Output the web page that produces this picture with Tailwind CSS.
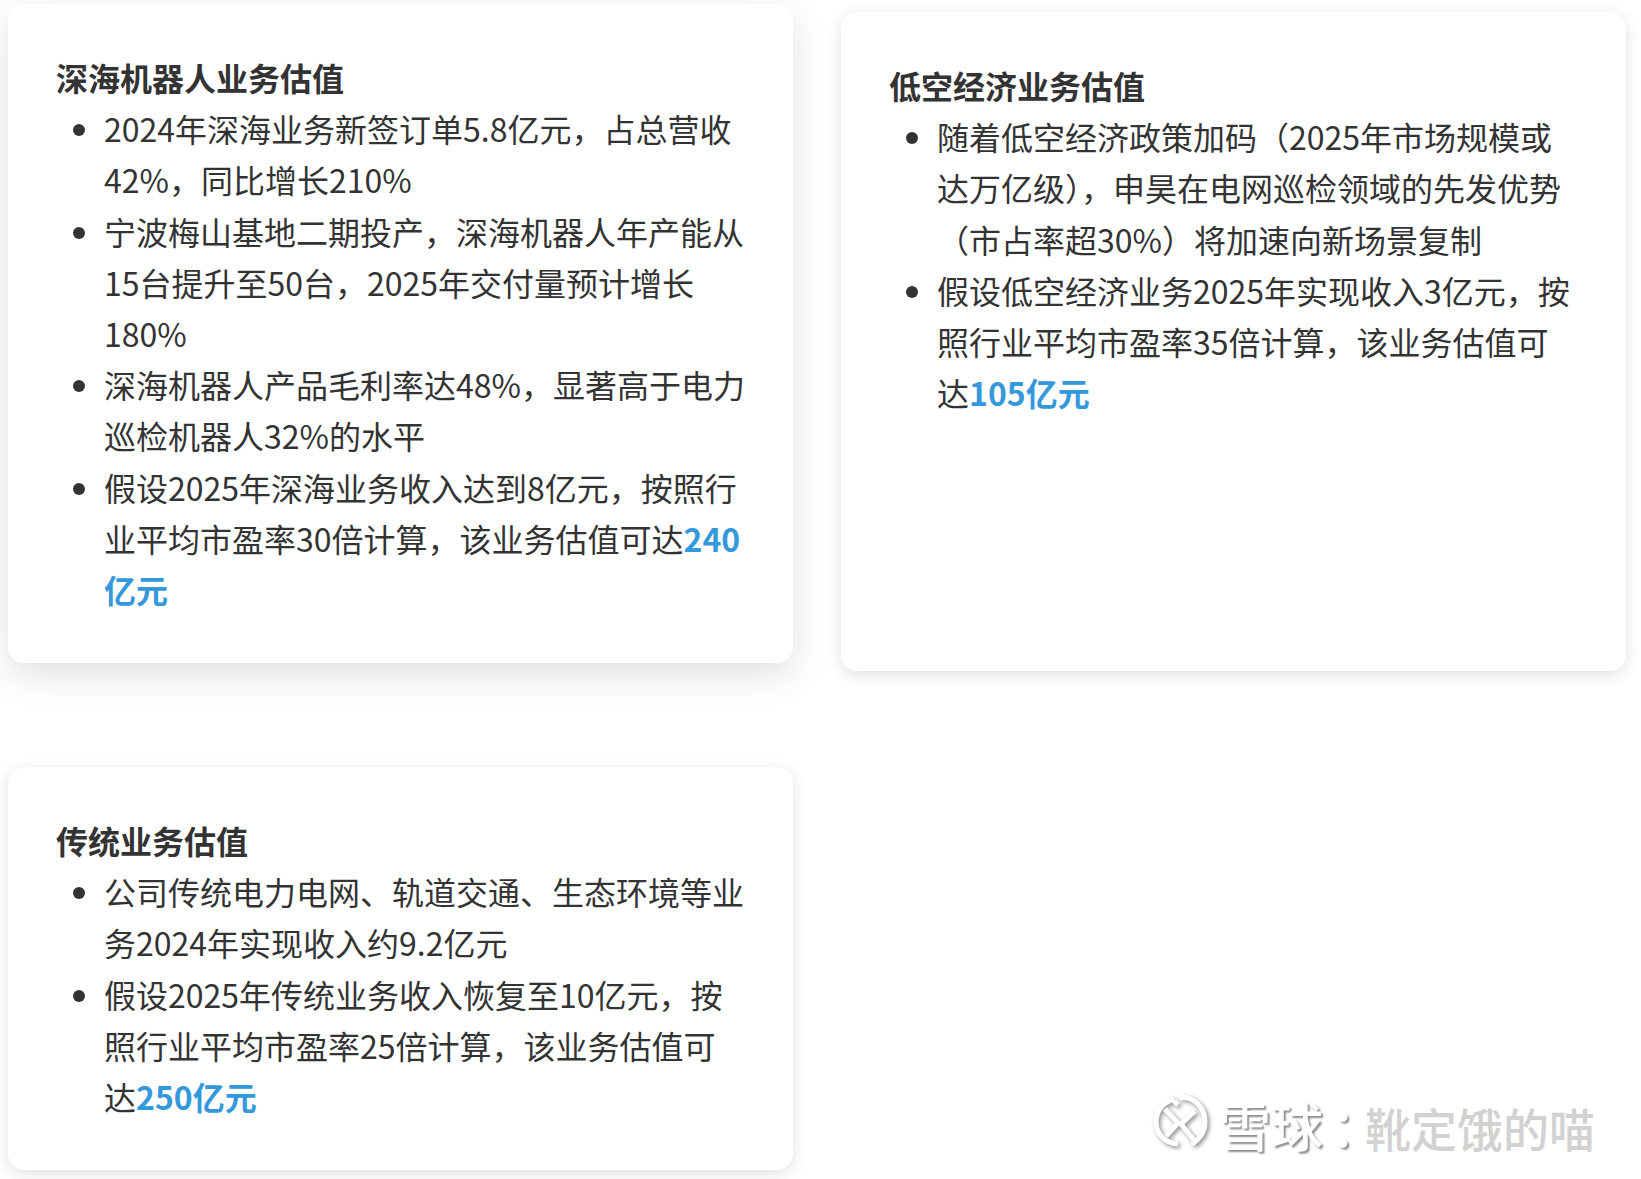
<!DOCTYPE html>
<html lang="zh">
<head>
  <meta charset="UTF-8" />
  <title>业务估值</title>
  <script src="https://cdn.jsdelivr.net/npm/@tailwindcss/browser@4"></script>
</head>
<body class="bg-white font-['Noto_Sans_CJK_SC',sans-serif] text-[#333]">
  <div class="relative h-[1179px] overflow-hidden">
    <div class="grid grid-cols-2 gap-x-12 gap-y-24 pt-3 pl-2 pr-[15px]">

      <!-- first card sits raised, as in its hover state -->
      <div class="bg-white rounded-2xl p-12 -translate-y-2 shadow-[0_12px_36px_rgba(0,0,0,0.12)] text-[32px] leading-[1.6]">
        <h3 class="font-bold">深海机器人业务估值</h3>
        <ul class="list-disc pl-12">
          <li>2024年深海业务新签订单5.8亿元，占总营收42%，同比增长210%</li>
          <li>宁波梅山基地二期投产，深海机器人年产能从15台提升至50台，2025年交付量预计增长180%</li>
          <li>深海机器人产品毛利率达48%，显著高于电力巡检机器人32%的水平</li>
          <li>假设2025年深海业务收入达到8亿元，按照行业平均市盈率30倍计算，该业务估值可达<span class="font-bold text-[#3498db]">240亿元</span></li>
        </ul>
      </div>

      <div class="bg-white rounded-2xl p-12 shadow-[0_4px_15px_rgba(0,0,0,0.12)] text-[32px] leading-[1.6]">
        <h3 class="font-bold">低空经济业务估值</h3>
        <ul class="list-disc pl-12">
          <li>随着低空经济政策加码（2025年市场规模或达万亿级），申昊在电网巡检领域的先发优势（市占率超30%）将加速向新场景复制</li>
          <li>假设低空经济业务2025年实现收入3亿元，按照行业平均市盈率35倍计算，该业务估值可达<span class="font-bold text-[#3498db]">105亿元</span></li>
        </ul>
      </div>

      <div class="bg-white rounded-2xl p-12 shadow-[0_4px_15px_rgba(0,0,0,0.12)] text-[32px] leading-[1.6]">
        <h3 class="font-bold">传统业务估值</h3>
        <ul class="list-disc pl-12">
          <li>公司传统电力电网、轨道交通、生态环境等业务2024年实现收入约9.2亿元</li>
          <li>假设2025年传统业务收入恢复至10亿元，按照行业平均市盈率25倍计算，该业务估值可达<span class="font-bold text-[#3498db]">250亿元</span></li>
        </ul>
      </div>
    </div>

    <!-- watermark -->
    <div class="absolute left-[1150px] top-[1092px] flex items-center">
      <svg class="w-[60px] h-[60px] drop-shadow-[2px_2px_2px_rgba(0,0,0,0.45)]" viewBox="0 0 60 60" fill="none" stroke="#fff" stroke-width="5">
        <path d="M24 7C13 10 6 19 6 30c0 12 9 21 22 22" />
        <path d="M30 5c15 0 25 11 25 25 0 10-6 18-13 22" />
        <path d="M15 17 28 31 16 44" />
        <path d="M24 9 28 13M45 19 31 32 44 48" />
      </svg>
      <span class="ml-[9px] mt-[6px] text-[52px] leading-none font-medium text-white [text-shadow:2px_2px_2px_rgba(0,0,0,0.45)]">雪球</span>
      <span class="ml-[7px] mt-[6px] text-[52px] leading-none font-medium text-white [text-shadow:2px_2px_2px_rgba(0,0,0,0.45)]">：</span>
      <span class="ml-[-17px] mt-[10px] text-[46px] leading-none font-medium text-[#d2d2d2] [text-shadow:1px_1px_0_#fff]">靴定饿的喵</span>
    </div>
  </div>
</body>
</html>
